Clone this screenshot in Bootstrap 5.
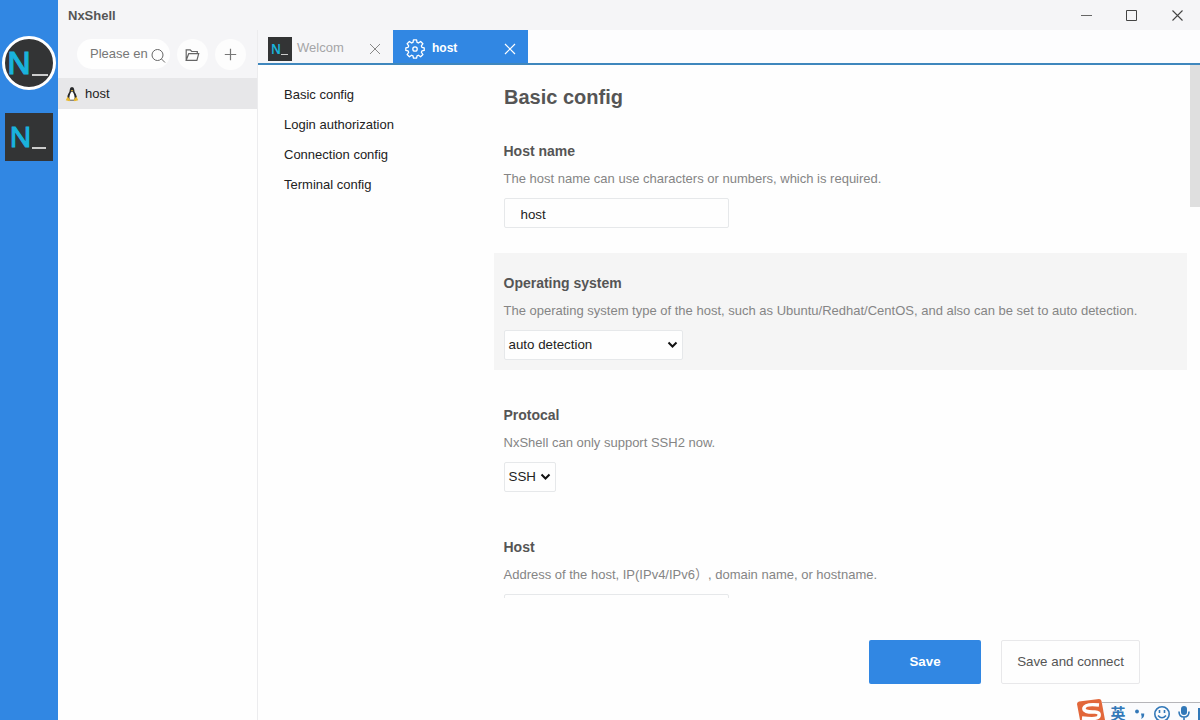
<!DOCTYPE html>
<html lang="en">
<head>
<meta charset="utf-8">
<meta name="viewport" content="width=device-width, initial-scale=1">
<title>NxShell</title>
<link href="https://cdn.jsdelivr.net/npm/bootstrap@5.3.0/dist/css/bootstrap.min.css" rel="stylesheet">
<style>
body{font:13px/20px "Liberation Sans",Arial,"Noto Sans CJK SC",sans-serif;color:#222;background:#fefefe;overflow:hidden}
svg{display:block;flex:none}
.rail{width:58px;background:#3187e3;padding-top:36px}
.avatar{width:54px;height:54px;border:3px solid #fff;background:#333435;overflow:hidden}
.session{width:48px;height:48px;background:#333435;margin-top:23px}
.logo-text{font-family:"Noto Sans","Liberation Sans",sans-serif}
.titlebar{height:30px;background:#f5f5f7;color:#555;padding-left:10px;padding-right:15px}
.titlebar b{padding-top:2px}
.win-buttons{gap:32px}
.hosts{width:200px;border-right:1px solid #ececee;background:#fefefe}
.tools{height:48px;background:#f5f5f7;padding:9px 11px 9px 19px}
.search{width:93px;height:30px;padding:0 4px 1px 13px;color:#777;background:#fefefe}
.search svg{margin-top:2px}
.round{width:31px;height:31px;background:#fdfdfd}
.round svg{margin-top:1px}
.host-row{height:31px;background:#e7e7e9;padding-left:7px;gap:6px;color:#222}
.tabs{height:35px;border-bottom:2px solid #3f87bd;background:#fdfdfe}
.tab-a{width:135px;background:#f6f6f8;color:#a5a5a7;padding:4px 12px 0 10px}
.tab-a span{margin:-2px 0 0 5px}
.tab-b{width:135px;background:#3187e3;color:#fff;padding:1px 12px 0 11px;font-size:12px}
.tab-b b{margin:1px 0 0 6px}
.tab-b svg{margin-top:4px}
.menu{width:236px;padding:15px 0 0 26px;line-height:30px}
.form-area{height:533px;overflow:hidden}
.form-area h1{font-size:20px;line-height:24px;font-weight:700;color:#555;margin:20px 0 12px 10px}
.field{height:117px;margin-bottom:15px;padding:20px 0 0 9.500px;width:693px}
.field.hot{background:#f5f5f5}
.field h2{font-size:14px;line-height:20px;font-weight:700;color:#555;margin:0 0 8px}
.field p{margin:0 0 9px;color:#858585;line-height:20px;white-space:nowrap}
.box{height:30px;border:1px solid #e6e8ea;background:#fefefe;font-size:13.333px;color:#222;border-radius:2px}
.host-input{width:225px;padding:6px 15px 0 16px}
.os{width:179px}.proto{width:52px}
.pick{padding:0 4px 1px 4px}
.scroll-thumb{width:10px;height:142px;background:#dfdfdf}
.actions{height:122px;padding:42px 60px 0 0;gap:20px}
.actions .btn{height:44px;font-size:13.333px;line-height:20px;border-radius:2px;padding:0}
.btn-save{width:112px;background:#3187e3;color:#fff;font-weight:700}
.btn-save:hover{background:#2878d0;color:#fff}
.btn-conn{width:139px;border:1px solid #e8e8ea;background:#fefefe;color:#555}
.ime{position:absolute;right:0;bottom:0;width:124px;height:24px}
</style>
</head>
<body>
<div class="d-flex vh-100">
  <aside class="rail d-flex flex-column align-items-center flex-shrink-0">
    <div class="avatar rounded-circle">
      <svg width="48" height="48" viewBox="0 0 48 48"><text class="logo-text" x="2" y="35" font-size="31" font-weight="500" fill="#19b3dc" stroke="#19b3dc" stroke-width="1" textLength="24" lengthAdjust="spacingAndGlyphs">N</text><path d="M27 36h16" stroke="#ccc" stroke-width="2"/></svg>
    </div>
    <div class="session">
      <svg width="48" height="48" viewBox="0 0 48 48"><text class="logo-text" x="4.500" y="34" font-size="26.500" fill="#19b3dc" stroke="#19b3dc" stroke-width="1" textLength="22" lengthAdjust="spacingAndGlyphs">N</text><path d="M27 35h14" stroke="#ccc" stroke-width="2"/></svg>
    </div>
  </aside>
  <div class="flex-grow-1 d-flex flex-column">
    <header class="titlebar d-flex align-items-center justify-content-between">
      <b>NxShell</b>
      <div class="win-buttons d-flex align-items-center">
        <svg width="13" height="13" viewBox="0 0 13 13"><path d="M1 6.500h11" stroke="#666"/></svg>
        <svg width="13" height="13" viewBox="0 0 13 13"><path d="M1.500 1.500h10v10h-10z" fill="none" stroke="#444"/></svg>
        <svg width="15" height="13" viewBox="0 0 15 13"><path d="M2.500 1.500l10 10M12.500 1.500l-10 10" stroke="#444" stroke-width="1.100"/></svg>
      </div>
    </header>
    <div class="d-flex flex-grow-1">
      <section class="hosts flex-shrink-0">
        <div class="tools d-flex justify-content-between align-items-center">
          <div class="search rounded-pill d-flex align-items-center justify-content-between"><span>Please en</span>
            <svg width="15" height="16" viewBox="0 0 15 16" fill="none" stroke="#666"><circle cx="6.500" cy="8" r="5.500"/><path d="M10.500 12l3.500 3.500"/></svg></div>
          <div class="round rounded-circle d-flex align-items-center justify-content-center">
            <svg width="15" height="14" viewBox="0 0 15 14" fill="none" stroke="#666" stroke-width="1.200"><path d="M1.200 12.300V1.800h4l1.500 1.700h5.600v2.200M1.200 12.300L3.700 5.700h10l-1.800 6.600z"/></svg></div>
          <div class="round rounded-circle d-flex align-items-center justify-content-center">
            <svg width="13" height="13" viewBox="0 0 13 13"><path d="M6.500 .8v11.400M.8 6.500h11.400" stroke="#777" stroke-width="1.200"/></svg></div>
        </div>
        <div class="host-row d-flex align-items-center">
          <svg width="14" height="16" viewBox="0 0 14 16"><path d="M4.800 3.500Q4.800 1 7 1t2.200 2.500q0 2.500 1.600 4.600 1.500 2.500.7 5L9 14.500H5L2.500 13q-.8-2.400.7-4.900Q4.800 6 4.800 3.500" fill="#27282a"/><path d="M7 5.200Q5.500 6.500 4.800 9q-1 3 .2 4.700h4q1.200-1.700.2-4.700Q8.500 6.500 7 5.200" fill="#fff"/><path d="M5.700 4h2.600L7 5.400zM2.600 10.500l2.800 3.500-1 1.300-3.600-1zM11.400 10.500L8.600 14l1 1.300 3.600-1z" fill="#e8b82e"/></svg>
          <span>host</span>
        </div>
      </section>
      <main class="flex-grow-1 d-flex flex-column position-relative">
        <nav class="tabs d-flex">
          <div class="tab-a d-flex align-items-center">
            <svg width="24" height="24" viewBox="0 0 24 24"><path d="M0 0h24v24H0z" fill="#333435"/><text class="logo-text" x="3" y="17" font-size="13.500" font-weight="600" fill="#19b3dc" textLength="10" lengthAdjust="spacingAndGlyphs">N</text><path d="M13 17.500h7" stroke="#ccc"/></svg>
            <span>Welcom</span>
            <svg class="ms-auto" width="12" height="12" viewBox="0 0 12 12"><path d="M1 1l10 10M11 1L1 11" stroke="#888"/></svg>
          </div>
          <div class="tab-b d-flex align-items-center">
            <svg width="22" height="22" viewBox="0 0 22 22" fill="none" stroke="#fff" stroke-width="1.400" stroke-linejoin="round"><g transform="translate(.9 .4) scale(.92)"><path d="M9.300 1.500h3.400l.5 2.800 1.500.7 2.400-1.700 2.500 2.500-1.700 2.400.6 1.500 2.500.5v2.900l-2.500.5-.6 1.500 1.700 2.400-2.500 2.500-2.400-1.700-1.500.7-.5 2.500H9.300l-.5-2.500-1.500-.7-2.400 1.700-2.500-2.500 1.700-2.400-.6-1.500-2.500-.5v-2.900l2.500-.5.6-1.500-1.700-2.400 2.500-2.500L7.300 5l1.500-.7z"/><circle cx="11" cy="11.500" r="2.400"/></g></svg>
            <b>host</b>
            <svg class="ms-auto" width="12" height="12" viewBox="0 0 12 12"><path d="M1 1l10 10M11 1L1 11" stroke="#fff" stroke-width="1.200"/></svg>
          </div>
        </nav>
        <div class="d-flex form-area">
          <div class="menu flex-shrink-0"><div>Basic config</div><div>Login authorization</div><div>Connection config</div><div>Terminal config</div></div>
          <div class="flex-grow-1">
            <h1>Basic config</h1>
            <div class="field"><h2>Host name</h2><p>The host name can use characters or numbers, which is required.</p><div class="box host-input">host</div></div>
            <div class="field hot"><h2>Operating system</h2><p>The operating system type of the host, such as Ubuntu/Redhat/CentOS, and also can be set to auto detection.</p>
              <div class="box pick os d-flex align-items-center justify-content-between">auto detection<svg width="11" height="8" viewBox="0 0 11 8"><path d="M1.500 1.500l4 4 4-4" fill="none" stroke="#111" stroke-width="2"/></svg></div></div>
            <div class="field"><h2>Protocal</h2><p>NxShell can only support SSH2 now.</p>
              <div class="box pick proto d-flex align-items-center justify-content-between">SSH<svg width="11" height="8" viewBox="0 0 11 8"><path d="M1.500 1.500l4 4 4-4" fill="none" stroke="#111" stroke-width="2"/></svg></div></div>
            <div class="field"><h2>Host</h2><p>Address of the host, IP(IPv4/IPv6）, domain name, or hostname.</p><div class="box host-input"></div></div>
          </div>
          <div class="scroll-thumb flex-shrink-0"></div>
        </div>
        <div class="actions d-flex justify-content-end">
          <button class="btn btn-save">Save</button>
          <button class="btn btn-conn">Save and connect</button>
        </div>
        <div class="ime">
          <svg width="124" height="24" viewBox="0 0 124 24"><path d="M20 6.500h104V24H20z" fill="#fafbfd"/><path d="M26 6.500h98" stroke="#b5b5b9"/>
            <path d="M1 8q0-2 2-2.500L23 3q2 0 2.500 2L29 24H4z" fill="#e2673a"/><path d="M23 9Q9 7.500 8 12t11 4q5 0 4 4t-17 2" fill="none" stroke="#fff" stroke-width="3.500"/>
            <text x="34.500" y="22.500" font-size="15" font-weight="700" font-family="Noto Sans CJK SC,sans-serif" fill="#3278b8">英</text>
            <circle cx="61" cy="15.500" r="1.900" fill="#3278b8"/><path d="M65 17.500h3.200q.4 4-3 5.500 1-2-.2-5.500" fill="#3278b8"/>
            <g fill="none" stroke="#3278b8" stroke-width="1.600"><circle cx="86" cy="18" r="7.200"/><path d="M82 19.500q4 4.500 8 0M83.500 14v3M88.500 14v3M103 15.500q0 5.500 5 5.500t5-5.500M108 21v3"/></g><rect x="105" y="10" width="6" height="9" rx="3" fill="#3278b8"/><path d="M122 12h2v12h-2z" fill="#3278b8"/></svg>
        </div>
      </main>
    </div>
  </div>
</div>
<script src="https://cdn.jsdelivr.net/npm/bootstrap@5.3.0/dist/js/bootstrap.bundle.min.js"></script>
</body>
</html>
